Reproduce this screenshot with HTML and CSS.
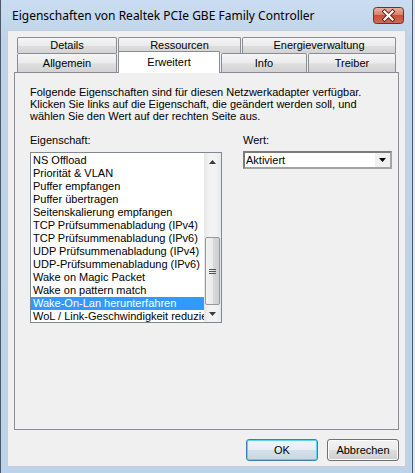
FILE: index.html
```html
<!DOCTYPE html>
<html lang="de">
<head>
<meta charset="utf-8">
<title>Eigenschaften von Realtek PCIe GBE Family Controller</title>
<link rel="stylesheet" href="styles.css">
</head>
<body>
<div class="window">
  <div class="titlebar">
    <span class="title">Eigenschaften von Realtek PCIe GBE Family Controller</span>
    <div class="close">
      <svg width="31" height="17" viewBox="0 0 31 17">
        <defs>
          <linearGradient id="cg" x1="0" y1="0" x2="0" y2="1">
            <stop offset="0" stop-color="#eab2a3"/>
            <stop offset="0.45" stop-color="#d9806d"/>
            <stop offset="0.5" stop-color="#c9503b"/>
            <stop offset="1" stop-color="#d36a55"/>
          </linearGradient>
        </defs>
        <rect x="0.5" y="0.5" width="30" height="16" rx="3" ry="3" fill="url(#cg)" stroke="#6e2f27"/>
        <path d="M11.5 4.5 L19.5 12.5 M19.5 4.5 L11.5 12.5" stroke="#5b2119" stroke-width="4" stroke-linecap="square"/>
        <path d="M11.5 4.5 L19.5 12.5 M19.5 4.5 L11.5 12.5" stroke="#ffffff" stroke-width="2.2" stroke-linecap="square"/>
      </svg>
    </div>
  </div>
  <div class="client">
    <div class="tabstrip">
      <div class="tabrow back">
        <div class="tab w-details">Details</div>
        <div class="tab w-ress">Ressourcen</div>
        <div class="tab w-energie">Energieverwaltung</div>
      </div>
      <div class="tabrow front">
        <div class="tab w-allg">Allgemein</div>
        <div class="tab selected w-erw">Erweitert</div>
        <div class="tab w-info">Info</div>
        <div class="tab w-treiber">Treiber</div>
      </div>
    </div>
    <div class="panel">
      <p class="desc">Folgende Eigenschaften sind für diesen Netzwerkadapter verfügbar.<br>Klicken Sie links auf die Eigenschaft, die geändert werden soll, und<br>wählen Sie den Wert auf der rechten Seite aus.</p>
      <div class="fields">
        <div class="col-left">
          <div class="label">Eigenschaft:</div>
          <div class="listbox">
            <ul class="items">
              <li>NS Offload</li>
              <li>Priorität &amp; VLAN</li>
              <li>Puffer empfangen</li>
              <li>Puffer übertragen</li>
              <li>Seitenskalierung empfangen</li>
              <li>TCP Prüfsummenabladung (IPv4)</li>
              <li>TCP Prüfsummenabladung (IPv6)</li>
              <li>UDP Prüfsummenabladung (IPv4)</li>
              <li>UDP-Prüfsummenabladung (IPv6)</li>
              <li>Wake on Magic Packet</li>
              <li>Wake on pattern match</li>
              <li class="sel">Wake-On-Lan herunterfahren</li>
              <li>WoL / Link-Geschwindigkeit reduzieren</li>
            </ul>
            <div class="vscroll">
              <div class="arrow">
                <svg width="7" height="4" viewBox="0 0 7 4"><path d="M0 4 L3.5 0 L7 4 Z" fill="#3c3c3c"/></svg>
              </div>
              <div class="track">
                <div class="thumb">
                  <span class="grip"></span>
                </div>
              </div>
              <div class="arrow">
                <svg width="7" height="4" viewBox="0 0 7 4"><path d="M0 0 L7 0 L3.5 4 Z" fill="#3c3c3c"/></svg>
              </div>
            </div>
          </div>
        </div>
        <div class="col-right">
          <div class="label">Wert:</div>
          <div class="combo">
            <span class="combo-text">Aktiviert</span>
            <span class="combo-btn">
              <svg width="7" height="4" viewBox="0 0 7 4"><path d="M0 0 L7 0 L3.5 4 Z" fill="#000"/></svg>
            </span>
          </div>
        </div>
      </div>
    </div>
    <div class="buttons">
      <button class="btn default">OK</button>
      <button class="btn">Abbrechen</button>
    </div>
  </div>
</div>
</body>
</html>
```

FILE: styles.css
```css
html, body {
  margin: 0;
  padding: 0;
}

body {
  background: #dde8f4;
  font-family: "Liberation Sans", Arial, sans-serif;
  font-size: 11px;
  color: #000;
}

.window {
  width: 413px;
  height: 473px;
  box-sizing: border-box;
  border-left: 1px solid #4e5967;
  border-right: 1px solid #4e5967;
  background: linear-gradient(#cadcf0, #bfd4ea 40px, #bdd3ea);
  padding: 0 6px 6px 6px;
  display: flex;
  flex-direction: column;
}

.titlebar {
  height: 30px;
  flex: none;
  display: flex;
  justify-content: space-between;
  align-items: flex-start;
}

.title {
  margin-left: 5px;
  margin-top: 7px;
  font-family: "Noto Sans", "Open Sans", sans-serif;
  font-size: 12px;
  line-height: 17px;
  color: #000;
}

.close {
  margin-top: 7px;
  margin-right: 2px;
  width: 31px;
  height: 17px;
}

.close svg {
  display: block;
}

.client {
  flex: 1;
  box-sizing: border-box;
  background: #f0f0f0;
  border: 1px solid #c4cfdb;
  padding: 6px 6px 5px 6px;
  display: flex;
  flex-direction: column;
}

/* Tabs */
.tabstrip {
  margin-left: 3px;
  display: flex;
  flex-direction: column;
}

.tabrow {
  display: flex;
  gap: 1px;
  align-items: flex-start;
}

.tab {
  box-sizing: border-box;
  border: 1px solid #898c95;
  border-bottom: none;
  border-radius: 2px 2px 0 0;
  background: linear-gradient(#f5f5f5, #ebebeb 50%, #dedede 55%, #d3d3d3);
  text-align: center;
  white-space: nowrap;
}

.back .tab {
  height: 16px;
  line-height: 15px;
}

.front .tab {
  height: 19px;
  line-height: 18px;
}

.front .tab.selected {
  position: relative;
  z-index: 1;
  height: 22px;
  line-height: 20px;
  margin-top: -2px;
  margin-bottom: -1px;
  background: #ffffff;
}

.w-details { width: 100px; }
.w-ress { width: 123px; }
.w-energie { width: 154px; }
.w-allg { width: 100px; }
.w-erw { width: 102px; }
.w-info { width: 86px; }
.w-treiber { width: 88px; }

/* Panel */
.panel {
  box-sizing: border-box;
  height: 358px;
  border: 1px solid #898c95;
  background: #f0f0f0;
  padding: 13px 15px 0 15px;
}

.desc {
  margin: 0;
  line-height: 12px;
}

.fields {
  display: flex;
  gap: 21px;
  margin-top: 12px;
}

.label {
  line-height: 13px;
}

.col-left {
  width: 192px;
  display: flex;
  flex-direction: column;
}

.col-right {
  display: flex;
  flex-direction: column;
}

.listbox {
  margin-top: 5px;
  box-sizing: border-box;
  width: 192px;
  height: 171px;
  border: 1px solid #828790;
  background: #fff;
  display: flex;
}

.items {
  list-style: none;
  margin: 0;
  padding: 1px 0 0 0;
  flex: 1;
  min-width: 0;
  overflow: hidden;
}

.items li {
  height: 13px;
  line-height: 13px;
  padding-left: 2px;
  white-space: nowrap;
  overflow: hidden;
}

.items li.sel {
  background: #3399ff;
  color: #fff;
}

.vscroll {
  width: 17px;
  flex: none;
  display: flex;
  flex-direction: column;
  background: linear-gradient(90deg, #e6e6e6, #f3f3f3 30%, #f3f3f3 70%, #e9e9e9);
}

.arrow {
  height: 17px;
  flex: none;
  display: flex;
  align-items: center;
  justify-content: center;
}

.arrow svg {
  display: block;
}

.track {
  flex: 1;
  display: flex;
  flex-direction: column;
  padding: 0 1px;
}

.thumb {
  margin-top: 67px;
  height: 68px;
  box-sizing: border-box;
  border: 1px solid #979797;
  border-radius: 2px;
  background: linear-gradient(90deg, #f2f2f2, #ebebeb 50%, #d8d8d8 55%, #d0d0d0);
  display: flex;
  align-items: center;
  justify-content: center;
}

.grip {
  width: 7px;
  height: 5px;
  background: linear-gradient(#555 0, #555 1px, transparent 1px, transparent 2px, #555 2px, #555 3px, transparent 3px, transparent 4px, #555 4px, #555 5px);
}

.combo {
  margin-top: 4px;
  box-sizing: border-box;
  width: 149px;
  height: 18px;
  border: 2px solid;
  border-color: #7b7b7b #a3a3a3 #a3a3a3 #7b7b7b;
  background: #fff;
  display: flex;
  align-items: center;
}

.combo-text {
  flex: 1;
  padding-left: 1px;
  line-height: 13px;
}

.combo-btn {
  width: 15px;
  height: 14px;
  background: #f0f0f0;
  display: flex;
  align-items: center;
  justify-content: center;
}

.combo-btn svg {
  display: block;
}

/* Buttons */
.buttons {
  margin-top: 9px;
  display: flex;
  justify-content: flex-end;
  gap: 9px;
}

.btn {
  width: 72px;
  height: 22px;
  box-sizing: border-box;
  margin: 0;
  padding: 0;
  border: 1px solid #707070;
  border-radius: 3px;
  background: linear-gradient(#f2f2f2, #ebebeb 50%, #dddddd 51%, #cfcfcf);
  box-shadow: inset 0 0 0 1px #fcfcfc;
  font-family: "Liberation Sans", Arial, sans-serif;
  font-size: 11px;
  color: #000;
}

.btn.default {
  border-color: #3c7fb1;
  box-shadow: inset 0 0 0 1px #5fd2f4;
  background: linear-gradient(#eef6fb, #e6eff5 50%, #d5e1ea 51%, #cbd6de);
}
```
